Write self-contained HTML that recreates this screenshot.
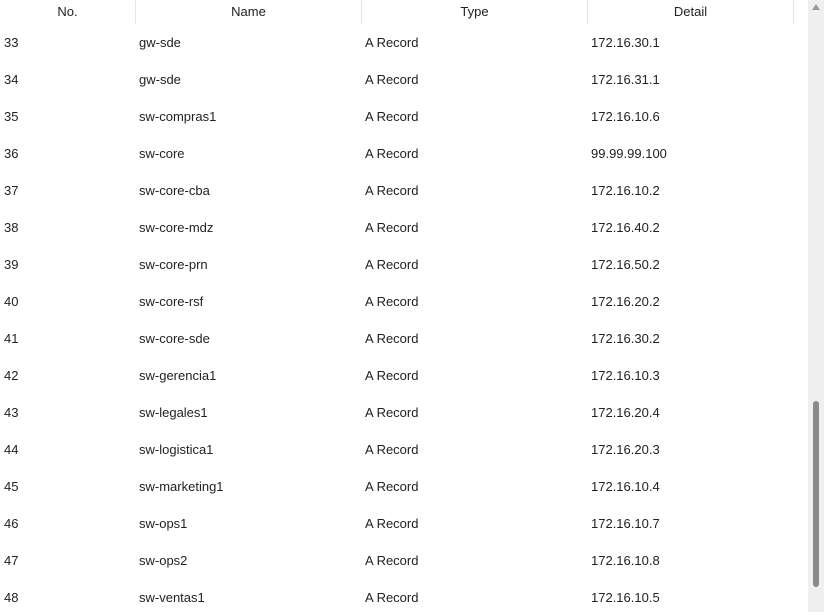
<!DOCTYPE html>
<html><head><style>
body{margin:0;width:824px;height:612px;overflow:hidden;background:#fff;font-family:"Liberation Sans",Arial,sans-serif;font-size:13px;color:#222;position:relative}
.h{position:absolute;top:0;height:23px;line-height:23px;text-align:center;color:#222}
.sep{position:absolute;top:0;width:1px;height:24px;background:#e4e4e4}
.r{position:absolute;left:0;width:808px;height:37px;line-height:37px}
.r span{position:absolute}
.sb{position:absolute;left:808px;top:0;width:16px;height:612px;background:#efefef}
.th{position:absolute;left:813px;top:401px;width:6px;height:186px;background:#8a8a8a;border-radius:3px}
.up{position:absolute;left:812px;top:4px;width:0;height:0;border-left:4px solid transparent;border-right:4px solid transparent;border-bottom:6px solid #999}
</style></head><body>
<div class="h" style="left:0;width:135px">No.</div>
<div class="h" style="left:136px;width:225px">Name</div>
<div class="h" style="left:362px;width:225px">Type</div>
<div class="h" style="left:588px;width:205px">Detail</div>
<div class="sep" style="left:135px"></div><div class="sep" style="left:361px"></div><div class="sep" style="left:587px"></div><div class="sep" style="left:793px"></div>
<div id="rows"></div>
<div class="sb"></div><div class="th"></div><div class="up"></div>
<script>
var d=[["33","gw-sde","172.16.30.1"],["34","gw-sde","172.16.31.1"],["35","sw-compras1","172.16.10.6"],["36","sw-core","99.99.99.100"],["37","sw-core-cba","172.16.10.2"],["38","sw-core-mdz","172.16.40.2"],["39","sw-core-prn","172.16.50.2"],["40","sw-core-rsf","172.16.20.2"],["41","sw-core-sde","172.16.30.2"],["42","sw-gerencia1","172.16.10.3"],["43","sw-legales1","172.16.20.4"],["44","sw-logistica1","172.16.20.3"],["45","sw-marketing1","172.16.10.4"],["46","sw-ops1","172.16.10.7"],["47","sw-ops2","172.16.10.8"],["48","sw-ventas1","172.16.10.5"]];
var h="";d.forEach(function(r,i){h+='<div class="r" style="top:'+(24+i*37)+'px"><span style="left:4px">'+r[0]+'</span><span style="left:139px">'+r[1]+'</span><span style="left:365px">A Record</span><span style="left:591px">'+r[2]+'</span></div>'});
document.getElementById("rows").innerHTML=h;
</script>
</body></html>
